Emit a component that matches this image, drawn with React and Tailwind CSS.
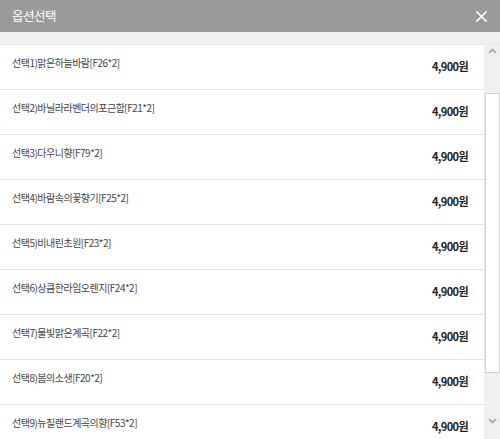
import React from "react";

const items = [
  "선택1)맑은하늘바람[F26*2]",
  "선택2)바닐라라벤더의포근함[F21*2]",
  "선택3)다우니향[F79*2]",
  "선택4)바람속의꽃향기[F25*2]",
  "선택5)비내린초원[F23*2]",
  "선택6)상큼한라임오렌지[F24*2]",
  "선택7)물빛맑은계곡[F22*2]",
  "선택8)봄의소생[F20*2]",
  "선택9)뉴질랜드계곡의향[F53*2]",
];

const font = { fontFamily: '"Noto Sans CJK KR", "Noto Sans", sans-serif' };

export default function App() {
  return (
    <div className="w-[500px] h-[439px] overflow-hidden flex flex-col bg-white" style={font}>
      <div className="h-[32px] shrink-0 bg-[#9a9a9a] flex items-center justify-between pl-[12px] pr-[12px]">
        <span className="text-white text-[12.5px] leading-none tracking-[-0.5px]">옵션선택</span>
        <svg width="11" height="11" viewBox="0 0 11 11" className="mr-[1px]">
          <path d="M1 1L10 10M10 1L1 10" stroke="white" strokeWidth="1.6" strokeLinecap="square" />
        </svg>
      </div>
      <div className="h-[13px] shrink-0 bg-[#efefef] border-b border-[#e6e6e6]"></div>
      <div className="flex-1 flex min-h-0">
        <div className="flex-1 overflow-hidden">
          {items.map((t) => (
            <div key={t} className="h-[45px] border-b border-[#e4e4e4] flex justify-between pl-[12px] pr-[16px]">
              <span className="mt-[11px] text-[10px] leading-[14px] tracking-[-0.5px] text-[#444]">{t}</span>
              <span className="mt-[14px] text-[11px] leading-[14px] tracking-[-0.6px] font-bold text-[#222]">4,900원</span>
            </div>
          ))}
        </div>
        <div className="w-[16px] shrink-0 bg-[#f0f0f0] flex flex-col items-center">
          <svg width="9" height="6" viewBox="0 0 9 6" className="mt-[3px]">
            <path d="M1 5L4.5 1.5L8 5" fill="none" stroke="#a0a0a0" strokeWidth="1.6" />
          </svg>
          <div className="mt-[39px] w-[15px] ml-[1px] h-[280px] bg-white border border-[#cfcfcf]"></div>
          <svg width="9" height="6" viewBox="0 0 9 6" className="mt-[45px]">
            <path d="M1 1L4.5 4.5L8 1" fill="none" stroke="#a0a0a0" strokeWidth="1.6" />
          </svg>
        </div>
      </div>
    </div>
  );
}
